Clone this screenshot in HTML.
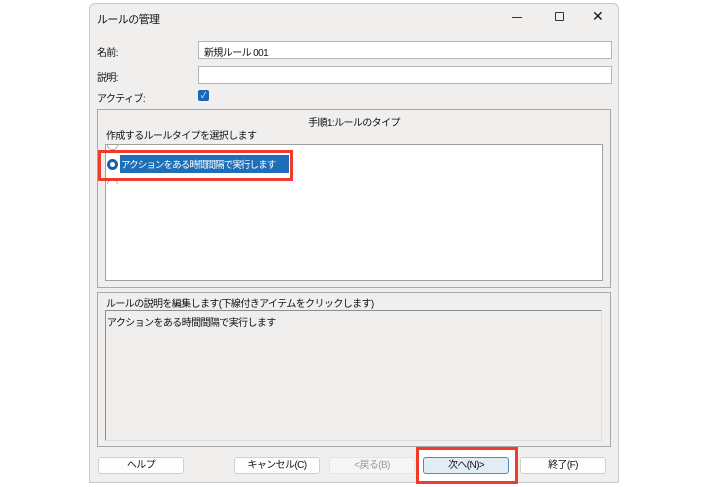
<!DOCTYPE html>
<html><head><meta charset="utf-8"><style>
*{box-sizing:border-box;margin:0;padding:0}
body{width:708px;height:487px;background:#fff;position:relative;overflow:hidden;font-family:"Liberation Sans","Noto Sans CJK JP",sans-serif;font-size:10px;color:#111}
.a{position:absolute}
.win{left:89px;top:3px;width:530px;height:480px;background:#f0efee;border:1px solid #c8c8c8;border-radius:6px 6px 0 0}
.inp{background:#fff;border:1px solid #b4b4b4}
.btn{background:#fdfdfd;border:1px solid #cfcfcf;border-radius:3px;text-align:center;line-height:15px;height:17px;width:86px;top:457px}
.red{border:3px solid #ee3b2b}
.c{letter-spacing:-0.6px}
</style></head><body>
<div class="a win"></div>
<div class="a c" style="left:97px;top:11px;font-size:11px">ルールの管理</div>
<div class="a" style="left:512px;top:17px;width:10px;height:1px;background:#333"></div>
<div class="a" style="left:555px;top:12px;width:9px;height:9px;border:1px solid #333;border-radius:1px"></div>
<div class="a" style="left:592px;top:8px;font-size:14px">✕</div>
<div class="a c" style="left:97px;top:44px">名前:</div>
<div class="a inp c" style="left:198px;top:41px;width:414px;height:18px;padding:2px 5px">新規ルール 001</div>
<div class="a c" style="left:97px;top:69px">説明:</div>
<div class="a inp" style="left:198px;top:66px;width:414px;height:18px"></div>
<div class="a c" style="left:97px;top:90px">アクティブ:</div>
<div class="a" style="left:198px;top:90px;width:11px;height:11px;background:#1a66b8;border-radius:2px;color:#fff;font-size:8px;line-height:11px;text-align:center">✓</div>
<div class="a" style="left:97px;top:109px;width:514px;height:179px;border:1px solid #a8a8a8"></div>
<div class="a c" style="left:97px;top:114px;width:514px;text-align:center">手順1:ルールのタイプ</div>
<div class="a c" style="left:106px;top:127px">作成するルールタイプを選択します</div>
<div class="a inp" style="left:105px;top:144px;width:498px;height:137px;border-color:#a0a0a0"></div>
<div class="a" style="left:107px;top:145px;width:11px;height:5px;border:1px solid #aaa;border-top:0;border-radius:0 0 6px 6px"></div>
<div class="a" style="left:107px;top:179px;width:11px;height:5px;border:1px solid #aaa;border-bottom:0;border-radius:6px 6px 0 0"></div>
<div class="a c" style="left:120px;top:155px;width:169px;height:18px;background:#1f6fb8;color:#fff;padding:2px 1px;font-size:9.5px;letter-spacing:-0.9px;white-space:nowrap;overflow:hidden">アクションをある時間間隔で実行します</div>
<div class="a" style="left:107px;top:159px;width:11px;height:11px;border-radius:50%;background:#fff;border:3px solid #1a5fa8"></div>
<div class="a red" style="left:98px;top:150px;width:195px;height:31px"></div>
<div class="a" style="left:97px;top:292px;width:514px;height:155px;border:1px solid #a8a8a8"></div>
<div class="a c" style="left:106px;top:295px">ルールの説明を編集します(下線付きアイテムをクリックします)</div>
<div class="a c" style="left:105px;top:310px;width:497px;height:131px;background:#efeeed;border:1px solid #8e8e8e;border-right-color:#ddd;border-bottom-color:#ddd;padding:3px 1px">アクションをある時間間隔で実行します</div>
<div class="a btn c" style="left:98px">ヘルプ</div>
<div class="a btn c" style="left:234px">キャンセル(C)</div>
<div class="a btn c" style="left:329px;color:#999;background:#f6f6f6;border-color:#e4e4e4">&lt;戻る(B)</div>
<div class="a red" style="left:416px;top:447px;width:102px;height:37px;background:#fff"></div>
<div class="a btn c" style="left:423px;background:#e2ecf4;border-color:#4a8ac8">次へ(N)&gt;</div>
<div class="a btn c" style="left:520px">終了(F)</div>
</body></html>
